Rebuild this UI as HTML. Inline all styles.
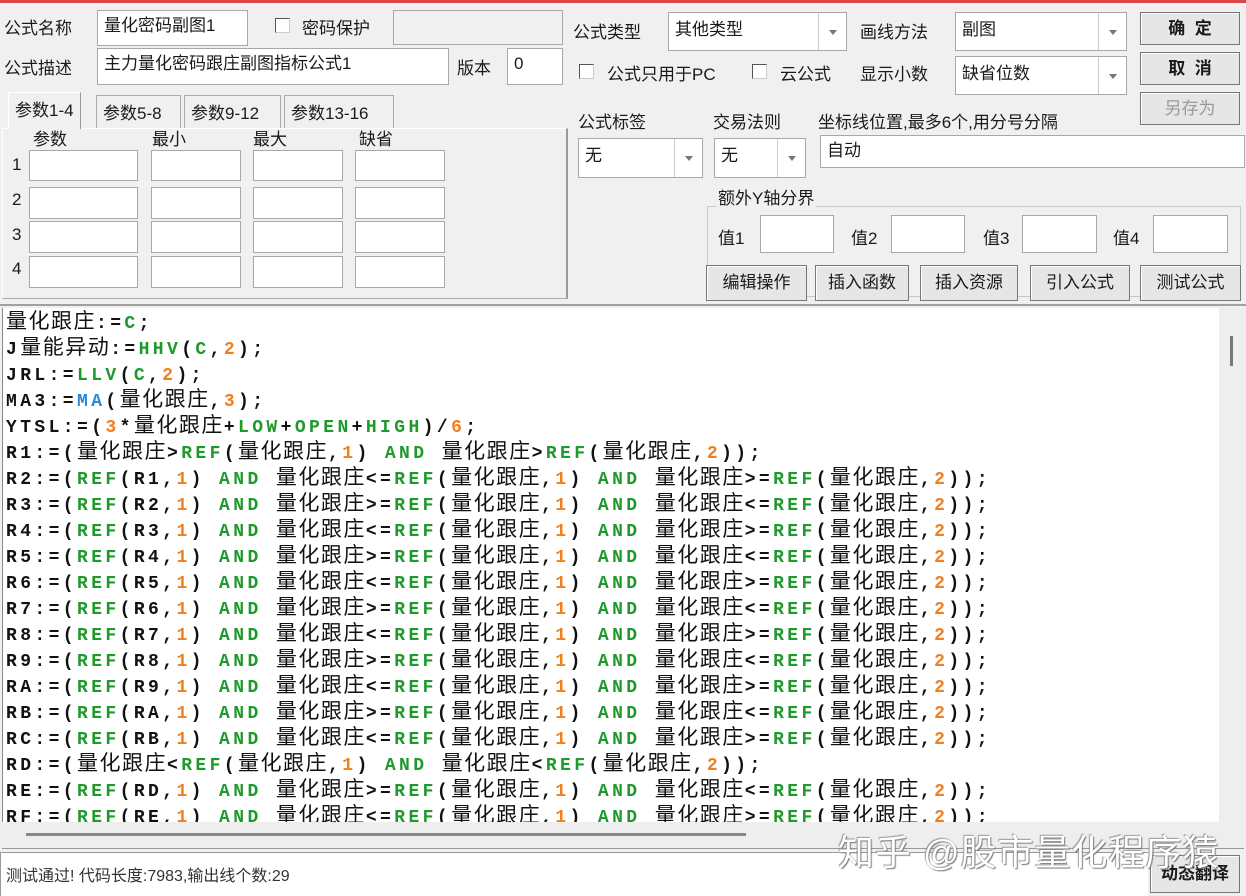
<!DOCTYPE html>
<html><head><meta charset="utf-8"><style>
*{box-sizing:border-box;margin:0;padding:0}
body{width:1246px;height:896px;background:#f0f0f0;position:relative;overflow:hidden;font-family:"Liberation Sans","Noto Sans CJK SC",sans-serif;font-size:17px;color:#1a1a1a}
.a{position:absolute;white-space:nowrap}
.in{position:absolute;background:#fff;border:1px solid #a8a8a8;padding:3px 6px;font-size:17px;line-height:24px}
.cb{position:absolute;width:15px;height:15px;border:1px solid #555;background:#fff;border-right-color:#ccc;border-bottom-color:#ccc}
.combo{position:absolute;background:#fff;border:1px solid #a8a8a8;padding:5px 6px;font-size:17px;line-height:24px}
.combo .ar{position:absolute;right:0;top:0;bottom:0;width:28px;border-left:1px solid #ccc}
.combo .ar:after{content:"";position:absolute;left:10px;top:50%;margin-top:-2px;border-left:4px solid transparent;border-right:4px solid transparent;border-top:5px solid #777}
.btn{position:absolute;background:#e6e6e6;border:1px solid #777;box-shadow:inset 1px 1px 0 #fff;text-align:center;font-size:17px}
.tab{position:absolute;top:95px;height:33px;border:1px solid #aaa;border-bottom:none;padding:3px 6px;font-size:17px}
.code{position:absolute;left:2px;top:308px;width:1217px;height:514px;background:#fff;border-left:1px solid #888;overflow:hidden;padding-left:3px;padding-top:3px;font-family:"Liberation Mono","Noto Sans CJK SC",monospace;font-weight:bold;font-size:18px;line-height:26px;letter-spacing:3.4px;color:#111}
.code div{white-space:nowrap;height:26px;line-height:26px}
.code .c{font-family:"Noto Sans CJK SC",sans-serif;font-weight:normal;font-size:21px;letter-spacing:1.5px;line-height:0}
.g{color:#1e9a2c}.o{color:#f0801c}.b{color:#2a8ad8}
</style></head><body>
<div class="a" style="left:0;top:0;width:1246px;height:3px;background:#d44"></div>

<div class="a" style="left:4px;top:14px">公式名称</div>
<div class="in" style="left:97px;top:10px;width:151px;height:36px">量化密码副图1</div>
<div class="cb" style="left:275px;top:18px"></div>
<div class="a" style="left:302px;top:14px">密码保护</div>
<div class="in" style="left:393px;top:10px;width:170px;height:35px;background:#f0f0f0"></div>
<div class="a" style="left:4px;top:54px">公式描述</div>
<div class="in" style="left:97px;top:48px;width:352px;height:37px">主力量化密码跟庄副图指标公式1</div>
<div class="a" style="left:457px;top:54px">版本</div>
<div class="in" style="left:507px;top:48px;width:56px;height:37px">0</div>

<div class="a" style="left:2px;top:128px;width:566px;height:171px;border:1px solid #aaa;border-top-color:#fff;border-left-color:#fff;border-right:2px solid #999"></div>
<div class="tab" style="left:8px;top:92px;height:37px;background:#f0f0f0;border-color:#fff #999 #fff #fff">参数1-4</div>
<div class="tab" style="left:96px;width:85px">参数5-8</div>
<div class="tab" style="left:184px;width:97px">参数9-12</div>
<div class="tab" style="left:284px;width:110px">参数13-16</div>
<div class="a" style="left:33px;top:125px">参数</div>
<div class="a" style="left:152px;top:125px">最小</div>
<div class="a" style="left:253px;top:125px">最大</div>
<div class="a" style="left:359px;top:125px">缺省</div>
<div class="a" style="left:12px;top:155px">1</div>
<div class="a" style="left:12px;top:190px">2</div>
<div class="a" style="left:12px;top:225px">3</div>
<div class="a" style="left:12px;top:259px">4</div>
<div class="in" style="left:29px;top:150px;width:109px;height:31px"></div><div class="in" style="left:151px;top:150px;width:90px;height:31px"></div><div class="in" style="left:253px;top:150px;width:90px;height:31px"></div><div class="in" style="left:355px;top:150px;width:90px;height:31px"></div>
<div class="in" style="left:29px;top:187px;width:109px;height:32px"></div><div class="in" style="left:151px;top:187px;width:90px;height:32px"></div><div class="in" style="left:253px;top:187px;width:90px;height:32px"></div><div class="in" style="left:355px;top:187px;width:90px;height:32px"></div>
<div class="in" style="left:29px;top:221px;width:109px;height:32px"></div><div class="in" style="left:151px;top:221px;width:90px;height:32px"></div><div class="in" style="left:253px;top:221px;width:90px;height:32px"></div><div class="in" style="left:355px;top:221px;width:90px;height:32px"></div>
<div class="in" style="left:29px;top:256px;width:109px;height:32px"></div><div class="in" style="left:151px;top:256px;width:90px;height:32px"></div><div class="in" style="left:253px;top:256px;width:90px;height:32px"></div><div class="in" style="left:355px;top:256px;width:90px;height:32px"></div>

<div class="a" style="left:573px;top:18px">公式类型</div>
<div class="combo" style="left:668px;top:12px;width:179px;height:39px">其他类型<span class="ar"></span></div>
<div class="a" style="left:860px;top:18px">画线方法</div>
<div class="combo" style="left:955px;top:12px;width:172px;height:39px">副图<span class="ar"></span></div>
<div class="btn" style="left:1140px;top:12px;width:100px;height:33px;line-height:31px;font-weight:bold">确&nbsp;&nbsp;定</div>
<div class="btn" style="left:1140px;top:52px;width:100px;height:33px;line-height:31px;font-weight:bold">取&nbsp;&nbsp;消</div>
<div class="btn" style="left:1140px;top:92px;width:100px;height:33px;line-height:31px;color:#999">另存为</div>
<div class="cb" style="left:579px;top:64px"></div>
<div class="a" style="left:607px;top:60px">公式只用于PC</div>
<div class="cb" style="left:752px;top:64px"></div>
<div class="a" style="left:780px;top:60px">云公式</div>
<div class="a" style="left:860px;top:60px">显示小数</div>
<div class="combo" style="left:955px;top:56px;width:172px;height:39px">缺省位数<span class="ar"></span></div>
<div class="a" style="left:578px;top:108px">公式标签</div>
<div class="a" style="left:713px;top:108px">交易法则</div>
<div class="a" style="left:818px;top:108px">坐标线位置,最多6个,用分号分隔</div>
<div class="combo" style="left:578px;top:138px;width:125px;height:40px">无<span class="ar"></span></div>
<div class="combo" style="left:714px;top:138px;width:92px;height:40px">无<span class="ar"></span></div>
<div class="in" style="left:820px;top:135px;width:425px;height:33px">自动</div>
<div class="a" style="left:707px;top:206px;width:534px;height:91px;border:1px solid #c8c8c8"></div>
<div class="a" style="left:716px;top:184px;background:#f0f0f0;padding:0 2px">额外Y轴分界</div>
<div class="a" style="left:718px;top:224px">值1</div><div class="in" style="left:760px;top:215px;width:74px;height:38px"></div>
<div class="a" style="left:851px;top:224px">值2</div><div class="in" style="left:891px;top:215px;width:74px;height:38px"></div>
<div class="a" style="left:983px;top:224px">值3</div><div class="in" style="left:1022px;top:215px;width:75px;height:38px"></div>
<div class="a" style="left:1113px;top:224px">值4</div><div class="in" style="left:1153px;top:215px;width:75px;height:38px"></div>
<div class="btn" style="left:706px;top:265px;width:101px;height:36px;line-height:34px">编辑操作</div>
<div class="btn" style="left:815px;top:265px;width:94px;height:36px;line-height:34px">插入函数</div>
<div class="btn" style="left:920px;top:265px;width:98px;height:36px;line-height:34px">插入资源</div>
<div class="btn" style="left:1030px;top:265px;width:100px;height:36px;line-height:34px">引入公式</div>
<div class="btn" style="left:1140px;top:265px;width:101px;height:36px;line-height:34px">测试公式</div>
<div class="a" style="left:0;top:304px;width:1246px;height:2px;background:#a0a0a0"></div>

<div class="code">
<div><span class="c">量化跟庄</span>:=<span class="g">C</span>;</div>
<div>J<span class="c">量能异动</span>:=<span class="g">HHV</span>(<span class="g">C</span>,<span class="o">2</span>);</div>
<div>JRL:=<span class="g">LLV</span>(<span class="g">C</span>,<span class="o">2</span>);</div>
<div>MA3:=<span class="b">MA</span>(<span class="c">量化跟庄</span>,<span class="o">3</span>);</div>
<div>YTSL:=(<span class="o">3</span>*<span class="c">量化跟庄</span>+<span class="g">LOW</span>+<span class="g">OPEN</span>+<span class="g">HIGH</span>)/<span class="o">6</span>;</div>
<div>R1:=(<span class="c">量化跟庄</span>&gt;<span class="g">REF</span>(<span class="c">量化跟庄</span>,<span class="o">1</span>) <span class="g">AND</span> <span class="c">量化跟庄</span>&gt;<span class="g">REF</span>(<span class="c">量化跟庄</span>,<span class="o">2</span>));</div>
<div>R2:=(<span class="g">REF</span>(R1,<span class="o">1</span>) <span class="g">AND</span> <span class="c">量化跟庄</span>&lt;=<span class="g">REF</span>(<span class="c">量化跟庄</span>,<span class="o">1</span>) <span class="g">AND</span> <span class="c">量化跟庄</span>&gt;=<span class="g">REF</span>(<span class="c">量化跟庄</span>,<span class="o">2</span>));</div>
<div>R3:=(<span class="g">REF</span>(R2,<span class="o">1</span>) <span class="g">AND</span> <span class="c">量化跟庄</span>&gt;=<span class="g">REF</span>(<span class="c">量化跟庄</span>,<span class="o">1</span>) <span class="g">AND</span> <span class="c">量化跟庄</span>&lt;=<span class="g">REF</span>(<span class="c">量化跟庄</span>,<span class="o">2</span>));</div>
<div>R4:=(<span class="g">REF</span>(R3,<span class="o">1</span>) <span class="g">AND</span> <span class="c">量化跟庄</span>&lt;=<span class="g">REF</span>(<span class="c">量化跟庄</span>,<span class="o">1</span>) <span class="g">AND</span> <span class="c">量化跟庄</span>&gt;=<span class="g">REF</span>(<span class="c">量化跟庄</span>,<span class="o">2</span>));</div>
<div>R5:=(<span class="g">REF</span>(R4,<span class="o">1</span>) <span class="g">AND</span> <span class="c">量化跟庄</span>&gt;=<span class="g">REF</span>(<span class="c">量化跟庄</span>,<span class="o">1</span>) <span class="g">AND</span> <span class="c">量化跟庄</span>&lt;=<span class="g">REF</span>(<span class="c">量化跟庄</span>,<span class="o">2</span>));</div>
<div>R6:=(<span class="g">REF</span>(R5,<span class="o">1</span>) <span class="g">AND</span> <span class="c">量化跟庄</span>&lt;=<span class="g">REF</span>(<span class="c">量化跟庄</span>,<span class="o">1</span>) <span class="g">AND</span> <span class="c">量化跟庄</span>&gt;=<span class="g">REF</span>(<span class="c">量化跟庄</span>,<span class="o">2</span>));</div>
<div>R7:=(<span class="g">REF</span>(R6,<span class="o">1</span>) <span class="g">AND</span> <span class="c">量化跟庄</span>&gt;=<span class="g">REF</span>(<span class="c">量化跟庄</span>,<span class="o">1</span>) <span class="g">AND</span> <span class="c">量化跟庄</span>&lt;=<span class="g">REF</span>(<span class="c">量化跟庄</span>,<span class="o">2</span>));</div>
<div>R8:=(<span class="g">REF</span>(R7,<span class="o">1</span>) <span class="g">AND</span> <span class="c">量化跟庄</span>&lt;=<span class="g">REF</span>(<span class="c">量化跟庄</span>,<span class="o">1</span>) <span class="g">AND</span> <span class="c">量化跟庄</span>&gt;=<span class="g">REF</span>(<span class="c">量化跟庄</span>,<span class="o">2</span>));</div>
<div>R9:=(<span class="g">REF</span>(R8,<span class="o">1</span>) <span class="g">AND</span> <span class="c">量化跟庄</span>&gt;=<span class="g">REF</span>(<span class="c">量化跟庄</span>,<span class="o">1</span>) <span class="g">AND</span> <span class="c">量化跟庄</span>&lt;=<span class="g">REF</span>(<span class="c">量化跟庄</span>,<span class="o">2</span>));</div>
<div>RA:=(<span class="g">REF</span>(R9,<span class="o">1</span>) <span class="g">AND</span> <span class="c">量化跟庄</span>&lt;=<span class="g">REF</span>(<span class="c">量化跟庄</span>,<span class="o">1</span>) <span class="g">AND</span> <span class="c">量化跟庄</span>&gt;=<span class="g">REF</span>(<span class="c">量化跟庄</span>,<span class="o">2</span>));</div>
<div>RB:=(<span class="g">REF</span>(RA,<span class="o">1</span>) <span class="g">AND</span> <span class="c">量化跟庄</span>&gt;=<span class="g">REF</span>(<span class="c">量化跟庄</span>,<span class="o">1</span>) <span class="g">AND</span> <span class="c">量化跟庄</span>&lt;=<span class="g">REF</span>(<span class="c">量化跟庄</span>,<span class="o">2</span>));</div>
<div>RC:=(<span class="g">REF</span>(RB,<span class="o">1</span>) <span class="g">AND</span> <span class="c">量化跟庄</span>&lt;=<span class="g">REF</span>(<span class="c">量化跟庄</span>,<span class="o">1</span>) <span class="g">AND</span> <span class="c">量化跟庄</span>&gt;=<span class="g">REF</span>(<span class="c">量化跟庄</span>,<span class="o">2</span>));</div>
<div>RD:=(<span class="c">量化跟庄</span>&lt;<span class="g">REF</span>(<span class="c">量化跟庄</span>,<span class="o">1</span>) <span class="g">AND</span> <span class="c">量化跟庄</span>&lt;<span class="g">REF</span>(<span class="c">量化跟庄</span>,<span class="o">2</span>));</div>
<div>RE:=(<span class="g">REF</span>(RD,<span class="o">1</span>) <span class="g">AND</span> <span class="c">量化跟庄</span>&gt;=<span class="g">REF</span>(<span class="c">量化跟庄</span>,<span class="o">1</span>) <span class="g">AND</span> <span class="c">量化跟庄</span>&lt;=<span class="g">REF</span>(<span class="c">量化跟庄</span>,<span class="o">2</span>));</div>
<div>RF:=(<span class="g">REF</span>(RE,<span class="o">1</span>) <span class="g">AND</span> <span class="c">量化跟庄</span>&lt;=<span class="g">REF</span>(<span class="c">量化跟庄</span>,<span class="o">1</span>) <span class="g">AND</span> <span class="c">量化跟庄</span>&gt;=<span class="g">REF</span>(<span class="c">量化跟庄</span>,<span class="o">2</span>));</div>
</div>
<div class="a" style="left:1219px;top:308px;width:26px;height:514px;background:#eee"></div>
<div class="a" style="left:1230px;top:336px;width:3px;height:30px;background:#777"></div>
<div class="a" style="left:2px;top:822px;width:1242px;height:27px;background:#eee;border-bottom:1px solid #999"></div>
<div class="a" style="left:26px;top:833px;width:720px;height:3px;background:#888"></div>
<div class="a" style="left:0;top:852px;width:1148px;height:44px;background:#fff;border-top:1px solid #999;border-left:1px solid #999"></div>
<div class="a" style="left:6px;top:862px;font-size:16px;color:#333">测试通过! 代码长度:7983,输出线个数:29</div>
<div class="btn" style="left:1150px;top:855px;width:90px;height:38px;line-height:36px;font-weight:bold">动态翻译</div>
<div class="a" style="left:838px;top:824px;font-size:36px;color:#fff;text-shadow:1px 1px 1px #777,-1px -1px 1px #999;letter-spacing:1px">知乎 @股市量化程序猿</div>
</body></html>
